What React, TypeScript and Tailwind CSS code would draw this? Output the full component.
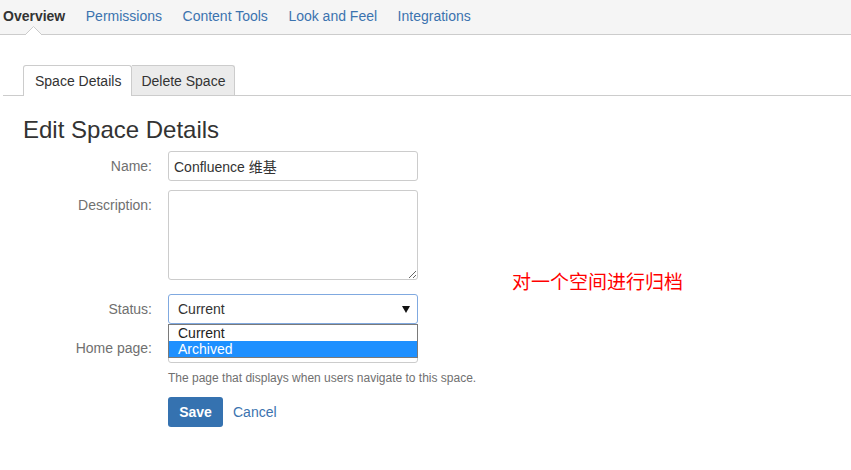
import React from 'react';

const navItems = ['Permissions', 'Content Tools', 'Look and Feel', 'Integrations'];

function Label({ children }: { children: React.ReactNode }) {
  return (
    <label className="w-[129px] shrink-0 pt-[5px] text-right text-[14px] leading-5 text-[#707070]">
      {children}
    </label>
  );
}

export default function App() {
  return (
    <div className="relative h-[470px] w-[851px] overflow-hidden bg-white font-['Liberation_Sans','Noto_Sans_CJK_SC',sans-serif] text-[#333]">
      {/* Space admin nav */}
      <nav className="relative flex h-[35px] gap-[20.5px] border-b border-[#ccc] bg-[#f5f5f5] pl-[3px] pt-[6px] text-[14px] leading-5">
        <span className="font-bold text-[#333]">Overview</span>
        {navItems.map((item) => (
          <a key={item} className="text-[#3b73af]">
            {item}
          </a>
        ))}
        <svg className="absolute left-[25px] top-[26px]" width="17" height="10" viewBox="0 0 17 10">
          <polygon points="0,9 8.5,0.5 17,9 17,10 0,10" fill="#fff" />
          <polyline points="0,9 8.5,0.5 17,9" fill="none" stroke="#ccc" strokeWidth="1" />
        </svg>
      </nav>

      {/* Tabs */}
      <div className="ml-[3px] mt-[30px] flex border-b border-[#ccc] pl-[20px] text-[14px] leading-5">
        <div className="-mb-px h-[31px] rounded-t-[3px] border border-b-0 border-[#ccc] bg-white pl-[11px] pr-[10px] pt-[5px] text-[#333]">
          Space Details
        </div>
        <div className="h-[30px] rounded-tr-[3px] border border-b-0 border-l-0 border-[#ccc] bg-[#ebebeb] px-[9px] pt-[5px] text-[#333]">
          Delete Space
        </div>
      </div>

      <h1 className="ml-[23px] mt-[20px] text-[24px] leading-[28px] text-[#333]">Edit Space Details</h1>

      <form className="pl-[23px]">
        <div className="mt-[7px] flex">
          <Label>Name:</Label>
          <input
            readOnly
            value="Confluence 维基"
            className="ml-[16px] h-[30px] w-[250px] rounded-[3px] border border-[#ccc] px-[5px] text-[14px] text-[#333] outline-none"
          />
        </div>

        <div className="mt-[9px] flex">
          <Label>Description:</Label>
          <textarea
            readOnly
            className="ml-[16px] h-[90px] w-[250px] rounded-[3px] border border-[#ccc] px-[5px] text-[14px] outline-none"
          />
        </div>

        <div className="mt-[14px] flex">
          <Label>Status:</Label>
          <div className="relative z-10 ml-[16px] w-[250px]">
            <div className="flex h-[30px] items-center justify-between rounded-[3px] border border-[#80a9e0] pl-[9px] pr-[7px] text-[14px] text-[#333]">
              <span>Current</span>
              <svg width="8" height="7" viewBox="0 0 8 7">
                <polygon points="0,0 8,0 4,7" fill="#111" />
              </svg>
            </div>
            {/* open option list */}
            <ul className="absolute left-0 top-[30px] w-[250px] border border-[#7a7a7a] bg-white text-[14px] leading-4">
              <li className="h-4 pl-[9px] text-[#222]">Current</li>
              <li className="h-4 bg-[#1e90ff] pl-[9px] text-white">Archived</li>
            </ul>
          </div>
        </div>

        <div className="mt-[9px] flex">
          <Label>Home page:</Label>
          <input
            readOnly
            className="ml-[16px] h-[30px] w-[250px] rounded-[3px] border border-[#ccc] px-[5px] text-[14px] outline-none"
          />
        </div>

        <p className="ml-[145px] mt-[7px] text-[12px] leading-4 text-[#707070]">
          The page that displays when users navigate to this space.
        </p>

        <div className="ml-[145px] mt-[11px] flex items-center gap-[10px]">
          <button
            type="button"
            className="h-[30px] w-[55px] rounded-[3px] bg-[#3572b0] text-[14px] font-bold text-white"
          >
            Save
          </button>
          <a className="text-[14px] text-[#3b73af]">Cancel</a>
        </div>
      </form>

      <span className="absolute left-[512px] top-[271px] text-[19px] leading-6 text-[#ff0000]">
        对一个空间进行归档
      </span>
    </div>
  );
}
